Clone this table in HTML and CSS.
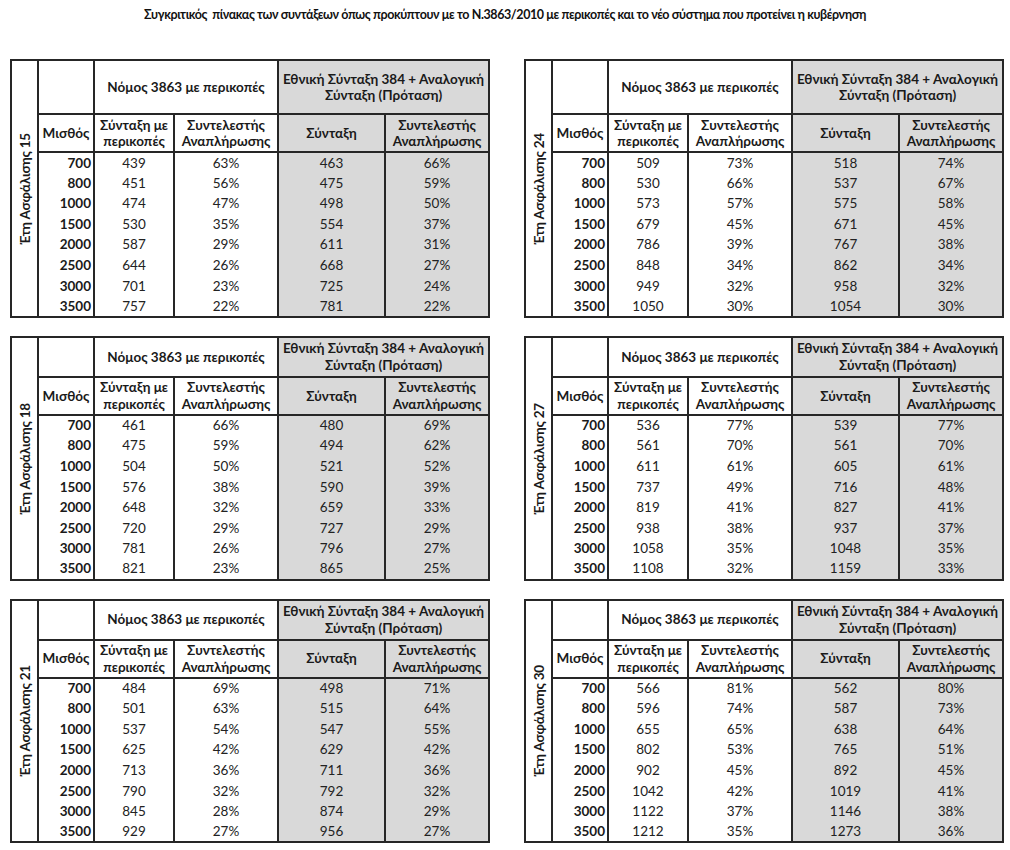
FILE: index.html
```html
<!DOCTYPE html>
<html lang="el">
<head>
<meta charset="utf-8">
<title>Συγκριτικός πίνακας συντάξεων</title>
<link rel="stylesheet" href="styles.css">
</head>
<body>
<h1 class="title">Συγκριτικός&nbsp; πίνακας των συντάξεων όπως προκύπτουν με το Ν.3863/2010 με περικοπές και το νέο σύστημα που προτείνει η κυβέρνηση</h1>
<div class="grid">

<table class="tbl tbl-first">
<colgroup><col class="c-yrs"><col class="c-sal"><col class="c-a"><col class="c-b"><col class="c-c"><col class="c-d"></colgroup>
<tr class="h1"><td class="yrs" rowspan="10"><span class="vt">Έτη Ασφάλισης 15</span></td><td></td><td colspan="2">Νόμος 3863 με περικοπές</td><td colspan="2" class="g">Εθνική Σύνταξη 384 + Αναλογική Σύνταξη (Πρόταση)</td></tr>
<tr class="h2"><td>Μισθός</td><td>Σύνταξη με περικοπές</td><td>Συντελεστής Αναπλήρωσης</td><td class="g">Σύνταξη</td><td class="g">Συντελεστής Αναπλήρωσης</td></tr>
<tr class="d first"><td class="s">700</td><td>439</td><td>63%</td><td class="g">463</td><td class="g">66%</td></tr>
<tr class="d"><td class="s">800</td><td>451</td><td>56%</td><td class="g">475</td><td class="g">59%</td></tr>
<tr class="d"><td class="s">1000</td><td>474</td><td>47%</td><td class="g">498</td><td class="g">50%</td></tr>
<tr class="d"><td class="s">1500</td><td>530</td><td>35%</td><td class="g">554</td><td class="g">37%</td></tr>
<tr class="d"><td class="s">2000</td><td>587</td><td>29%</td><td class="g">611</td><td class="g">31%</td></tr>
<tr class="d"><td class="s">2500</td><td>644</td><td>26%</td><td class="g">668</td><td class="g">27%</td></tr>
<tr class="d"><td class="s">3000</td><td>701</td><td>23%</td><td class="g">725</td><td class="g">24%</td></tr>
<tr class="d"><td class="s">3500</td><td>757</td><td>22%</td><td class="g">781</td><td class="g">22%</td></tr>
</table>

<table class="tbl tbl-first">
<colgroup><col class="c-yrs"><col class="c-sal"><col class="c-a"><col class="c-b"><col class="c-c"><col class="c-d"></colgroup>
<tr class="h1"><td class="yrs" rowspan="10"><span class="vt">Έτη Ασφάλισης 24</span></td><td></td><td colspan="2">Νόμος 3863 με περικοπές</td><td colspan="2" class="g">Εθνική Σύνταξη 384 + Αναλογική Σύνταξη (Πρόταση)</td></tr>
<tr class="h2"><td>Μισθός</td><td>Σύνταξη με περικοπές</td><td>Συντελεστής Αναπλήρωσης</td><td class="g">Σύνταξη</td><td class="g">Συντελεστής Αναπλήρωσης</td></tr>
<tr class="d"><td class="s">700</td><td>509</td><td>73%</td><td class="g">518</td><td class="g">74%</td></tr>
<tr class="d"><td class="s">800</td><td>530</td><td>66%</td><td class="g">537</td><td class="g">67%</td></tr>
<tr class="d"><td class="s">1000</td><td>573</td><td>57%</td><td class="g">575</td><td class="g">58%</td></tr>
<tr class="d"><td class="s">1500</td><td>679</td><td>45%</td><td class="g">671</td><td class="g">45%</td></tr>
<tr class="d"><td class="s">2000</td><td>786</td><td>39%</td><td class="g">767</td><td class="g">38%</td></tr>
<tr class="d"><td class="s">2500</td><td>848</td><td>34%</td><td class="g">862</td><td class="g">34%</td></tr>
<tr class="d"><td class="s">3000</td><td>949</td><td>32%</td><td class="g">958</td><td class="g">32%</td></tr>
<tr class="d"><td class="s">3500</td><td>1050</td><td>30%</td><td class="g">1054</td><td class="g">30%</td></tr>
</table>

<table class="tbl">
<colgroup><col class="c-yrs"><col class="c-sal"><col class="c-a"><col class="c-b"><col class="c-c"><col class="c-d"></colgroup>
<tr class="h1"><td class="yrs" rowspan="10"><span class="vt">Έτη Ασφάλισης 18</span></td><td></td><td colspan="2">Νόμος 3863 με περικοπές</td><td colspan="2" class="g">Εθνική Σύνταξη 384 + Αναλογική Σύνταξη (Πρόταση)</td></tr>
<tr class="h2"><td>Μισθός</td><td>Σύνταξη με περικοπές</td><td>Συντελεστής Αναπλήρωσης</td><td class="g">Σύνταξη</td><td class="g">Συντελεστής Αναπλήρωσης</td></tr>
<tr class="d"><td class="s">700</td><td>461</td><td>66%</td><td class="g">480</td><td class="g">69%</td></tr>
<tr class="d"><td class="s">800</td><td>475</td><td>59%</td><td class="g">494</td><td class="g">62%</td></tr>
<tr class="d"><td class="s">1000</td><td>504</td><td>50%</td><td class="g">521</td><td class="g">52%</td></tr>
<tr class="d"><td class="s">1500</td><td>576</td><td>38%</td><td class="g">590</td><td class="g">39%</td></tr>
<tr class="d"><td class="s">2000</td><td>648</td><td>32%</td><td class="g">659</td><td class="g">33%</td></tr>
<tr class="d"><td class="s">2500</td><td>720</td><td>29%</td><td class="g">727</td><td class="g">29%</td></tr>
<tr class="d"><td class="s">3000</td><td>781</td><td>26%</td><td class="g">796</td><td class="g">27%</td></tr>
<tr class="d"><td class="s">3500</td><td>821</td><td>23%</td><td class="g">865</td><td class="g">25%</td></tr>
</table>

<table class="tbl">
<colgroup><col class="c-yrs"><col class="c-sal"><col class="c-a"><col class="c-b"><col class="c-c"><col class="c-d"></colgroup>
<tr class="h1"><td class="yrs" rowspan="10"><span class="vt">Έτη Ασφάλισης 27</span></td><td></td><td colspan="2">Νόμος 3863 με περικοπές</td><td colspan="2" class="g">Εθνική Σύνταξη 384 + Αναλογική Σύνταξη (Πρόταση)</td></tr>
<tr class="h2"><td>Μισθός</td><td>Σύνταξη με περικοπές</td><td>Συντελεστής Αναπλήρωσης</td><td class="g">Σύνταξη</td><td class="g">Συντελεστής Αναπλήρωσης</td></tr>
<tr class="d"><td class="s">700</td><td>536</td><td>77%</td><td class="g">539</td><td class="g">77%</td></tr>
<tr class="d"><td class="s">800</td><td>561</td><td>70%</td><td class="g">561</td><td class="g">70%</td></tr>
<tr class="d"><td class="s">1000</td><td>611</td><td>61%</td><td class="g">605</td><td class="g">61%</td></tr>
<tr class="d"><td class="s">1500</td><td>737</td><td>49%</td><td class="g">716</td><td class="g">48%</td></tr>
<tr class="d"><td class="s">2000</td><td>819</td><td>41%</td><td class="g">827</td><td class="g">41%</td></tr>
<tr class="d"><td class="s">2500</td><td>938</td><td>38%</td><td class="g">937</td><td class="g">37%</td></tr>
<tr class="d"><td class="s">3000</td><td>1058</td><td>35%</td><td class="g">1048</td><td class="g">35%</td></tr>
<tr class="d"><td class="s">3500</td><td>1108</td><td>32%</td><td class="g">1159</td><td class="g">33%</td></tr>
</table>

<table class="tbl">
<colgroup><col class="c-yrs"><col class="c-sal"><col class="c-a"><col class="c-b"><col class="c-c"><col class="c-d"></colgroup>
<tr class="h1"><td class="yrs" rowspan="10"><span class="vt">Έτη Ασφάλισης 21</span></td><td></td><td colspan="2">Νόμος 3863 με περικοπές</td><td colspan="2" class="g">Εθνική Σύνταξη 384 + Αναλογική Σύνταξη (Πρόταση)</td></tr>
<tr class="h2"><td>Μισθός</td><td>Σύνταξη με περικοπές</td><td>Συντελεστής Αναπλήρωσης</td><td class="g">Σύνταξη</td><td class="g">Συντελεστής Αναπλήρωσης</td></tr>
<tr class="d"><td class="s">700</td><td>484</td><td>69%</td><td class="g">498</td><td class="g">71%</td></tr>
<tr class="d"><td class="s">800</td><td>501</td><td>63%</td><td class="g">515</td><td class="g">64%</td></tr>
<tr class="d"><td class="s">1000</td><td>537</td><td>54%</td><td class="g">547</td><td class="g">55%</td></tr>
<tr class="d"><td class="s">1500</td><td>625</td><td>42%</td><td class="g">629</td><td class="g">42%</td></tr>
<tr class="d"><td class="s">2000</td><td>713</td><td>36%</td><td class="g">711</td><td class="g">36%</td></tr>
<tr class="d"><td class="s">2500</td><td>790</td><td>32%</td><td class="g">792</td><td class="g">32%</td></tr>
<tr class="d"><td class="s">3000</td><td>845</td><td>28%</td><td class="g">874</td><td class="g">29%</td></tr>
<tr class="d"><td class="s">3500</td><td>929</td><td>27%</td><td class="g">956</td><td class="g">27%</td></tr>
</table>

<table class="tbl">
<colgroup><col class="c-yrs"><col class="c-sal"><col class="c-a"><col class="c-b"><col class="c-c"><col class="c-d"></colgroup>
<tr class="h1"><td class="yrs" rowspan="10"><span class="vt">Έτη Ασφάλισης 30</span></td><td></td><td colspan="2">Νόμος 3863 με περικοπές</td><td colspan="2" class="g">Εθνική Σύνταξη 384 + Αναλογική Σύνταξη (Πρόταση)</td></tr>
<tr class="h2"><td>Μισθός</td><td>Σύνταξη με περικοπές</td><td>Συντελεστής Αναπλήρωσης</td><td class="g">Σύνταξη</td><td class="g">Συντελεστής Αναπλήρωσης</td></tr>
<tr class="d"><td class="s">700</td><td>566</td><td>81%</td><td class="g">562</td><td class="g">80%</td></tr>
<tr class="d"><td class="s">800</td><td>596</td><td>74%</td><td class="g">587</td><td class="g">73%</td></tr>
<tr class="d"><td class="s">1000</td><td>655</td><td>65%</td><td class="g">638</td><td class="g">64%</td></tr>
<tr class="d"><td class="s">1500</td><td>802</td><td>53%</td><td class="g">765</td><td class="g">51%</td></tr>
<tr class="d"><td class="s">2000</td><td>902</td><td>45%</td><td class="g">892</td><td class="g">45%</td></tr>
<tr class="d"><td class="s">2500</td><td>1042</td><td>42%</td><td class="g">1019</td><td class="g">41%</td></tr>
<tr class="d"><td class="s">3000</td><td>1122</td><td>37%</td><td class="g">1146</td><td class="g">38%</td></tr>
<tr class="d"><td class="s">3500</td><td>1212</td><td>35%</td><td class="g">1273</td><td class="g">36%</td></tr>
</table>

</div>
</body>
</html>
```
FILE: styles.css
```css
html, body {
  margin: 0;
  padding: 0;
  background: #ffffff;
}

body {
  font-family: Lato, "Open Sans", "Liberation Sans", sans-serif;
  color: #1a1a1a;
}

.title {
  margin: 0 0 35px;
  padding-top: 6px;
  font-size: 12.5px;
  line-height: 18px;
  font-weight: 700;
  letter-spacing: -0.4px;
  text-align: center;
  color: #111;
}

.grid {
  display: grid;
  grid-template-columns: 478px 478px;
  column-gap: 36px;
  row-gap: 18px;
  padding-left: 10px;
  align-items: start;
}

.tbl {
  border-collapse: collapse;
  table-layout: fixed;
  width: 478px;
  border: 2px solid #262626;
  font-size: 13.5px;
  line-height: 16.5px;
}

.c-yrs { width: 27px; }
.c-sal { width: 56px; }
.c-a { width: 80px; }
.c-b { width: 104px; }
.c-c { width: 107px; }
.c-d { width: 104px; }

.tbl td {
  padding: 0;
  text-align: center;
  vertical-align: middle;
  border-left: 2px solid #262626;
  border-right: 2px solid #262626;
  white-space: nowrap;
}

.tbl .h1 td,
.tbl .h2 td {
  font-weight: 700;
  white-space: normal;
  border-bottom: 2px solid #262626;
  color: #1a1a1a;
}

.tbl .h1 { height: 40px; }
.tbl-first .h1 { height: 54px; }
.tbl .h2 { height: 38px; }
.tbl .d { height: 20.6px; }

.tbl .d td {
  color: #222;
}

.tbl td.g {
  background: #d9d9d9;
}

.tbl td.s {
  font-weight: 700;
  text-align: right;
  padding-right: 2px;
  color: #1a1a1a;
}

.tbl td.yrs {
  padding: 0;
  text-align: center;
}

.vt {
  display: inline-block;
  writing-mode: vertical-rl;
  transform: rotate(180deg);
  font-weight: 700;
  font-size: 13.5px;
  letter-spacing: -0.2px;
  line-height: 16px;
  white-space: nowrap;
  margin-top: 4px;
}
```
